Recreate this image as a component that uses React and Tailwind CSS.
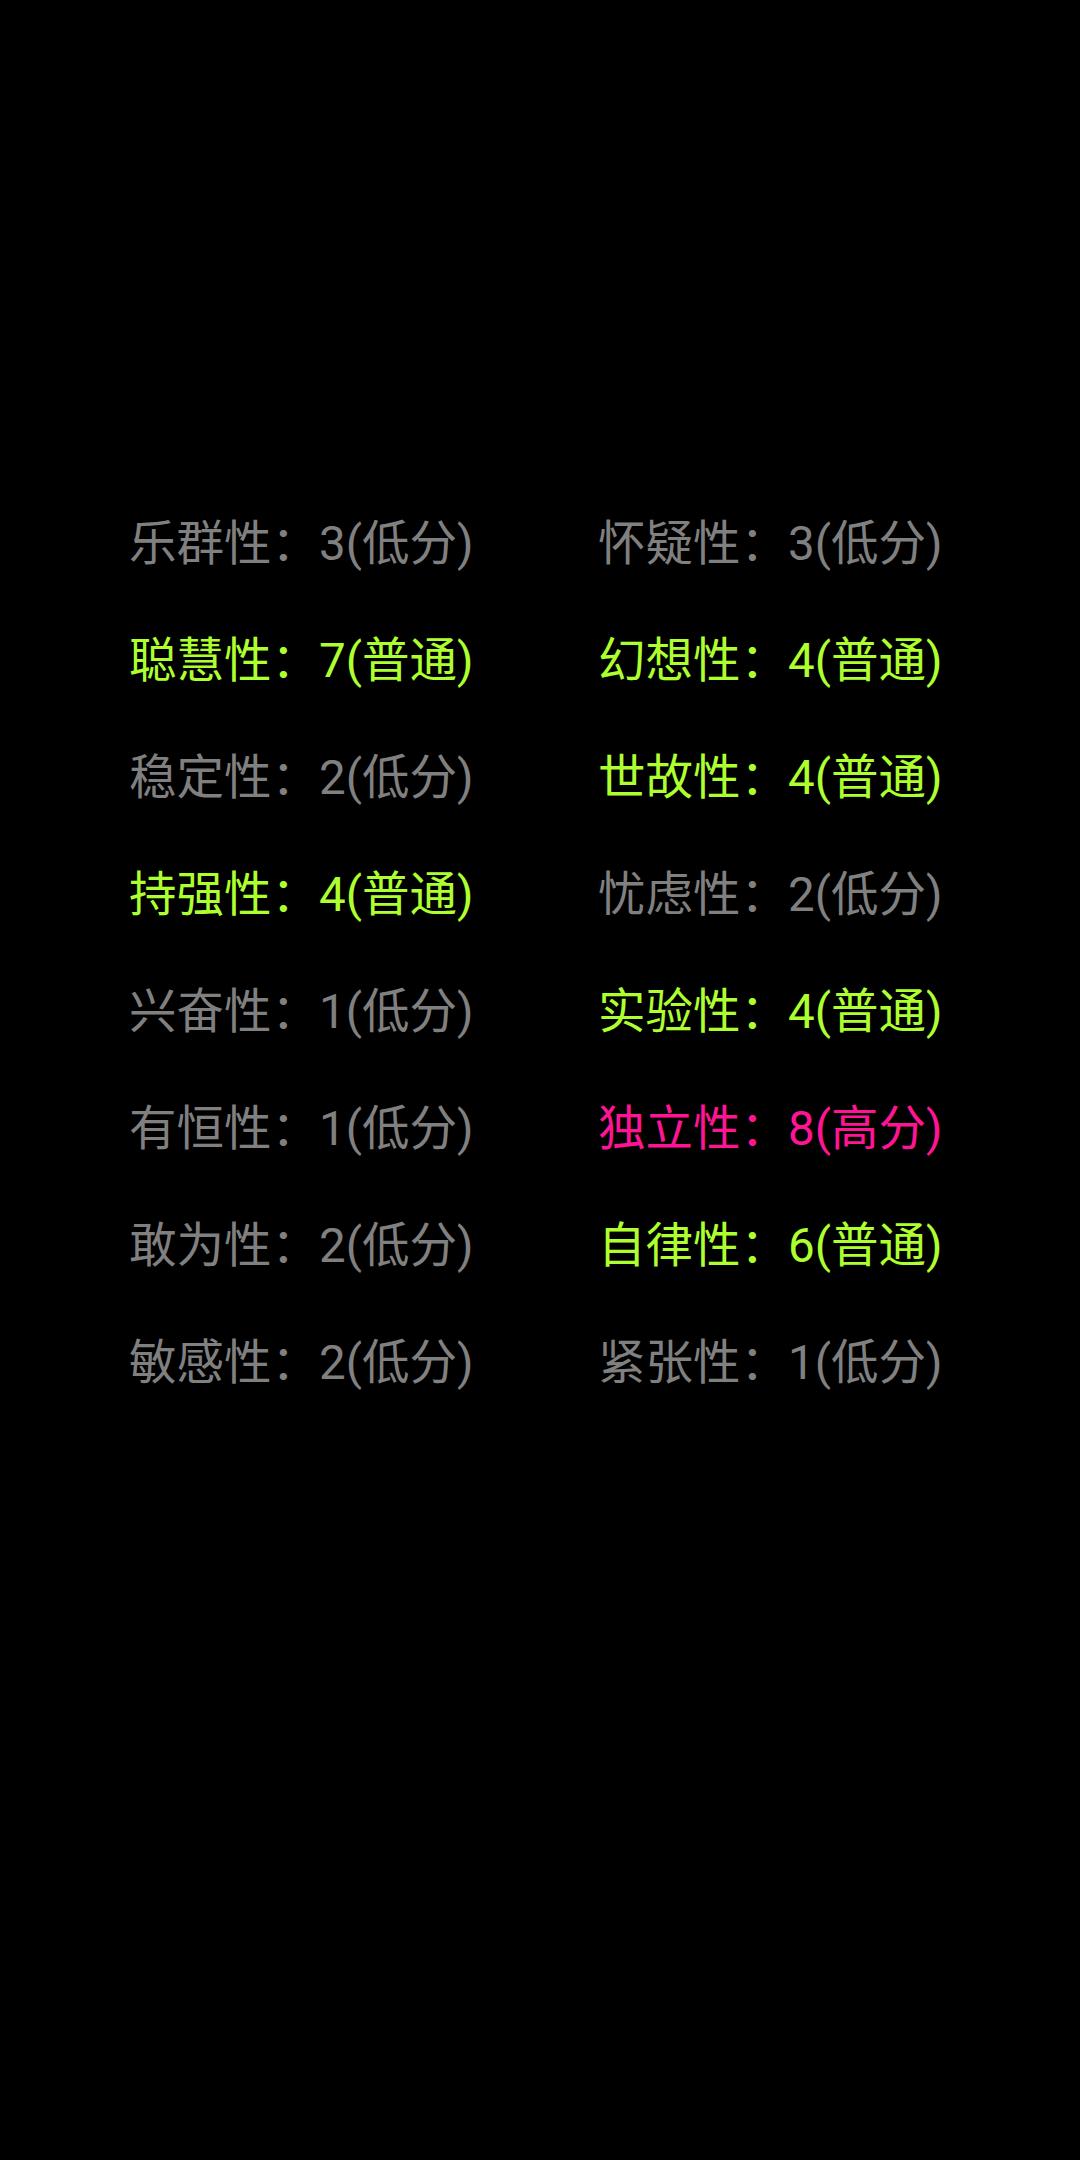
const G = "text-[#808080]";
const Y = "text-[#adff2f]";
const P = "text-[#ff1493]";

const rows = [
  [["乐群性", "3(低分)", G], ["怀疑性", "3(低分)", G]],
  [["聪慧性", "7(普通)", Y], ["幻想性", "4(普通)", Y]],
  [["稳定性", "2(低分)", G], ["世故性", "4(普通)", Y]],
  [["持强性", "4(普通)", Y], ["忧虑性", "2(低分)", G]],
  [["兴奋性", "1(低分)", G], ["实验性", "4(普通)", Y]],
  [["有恒性", "1(低分)", G], ["独立性", "8(高分)", P]],
  [["敢为性", "2(低分)", G], ["自律性", "6(普通)", Y]],
  [["敏感性", "2(低分)", G], ["紧张性", "1(低分)", G]],
];

export default function App() {
  return (
    <div className="w-[1080px] h-[2160px] bg-black pt-[486px] pl-[129px]" style={{ fontFamily: "Roboto, 'Noto Sans CJK SC', sans-serif" }}>
      <div className="grid grid-cols-[469px_469px]">
        {rows.flat().map(([k, v, c], i) => (
          <div key={i} className={`h-[117px] flex items-center text-[47.5px] whitespace-nowrap ${c}`}>
            {k}：{v}
          </div>
        ))}
      </div>
    </div>
  );
}
